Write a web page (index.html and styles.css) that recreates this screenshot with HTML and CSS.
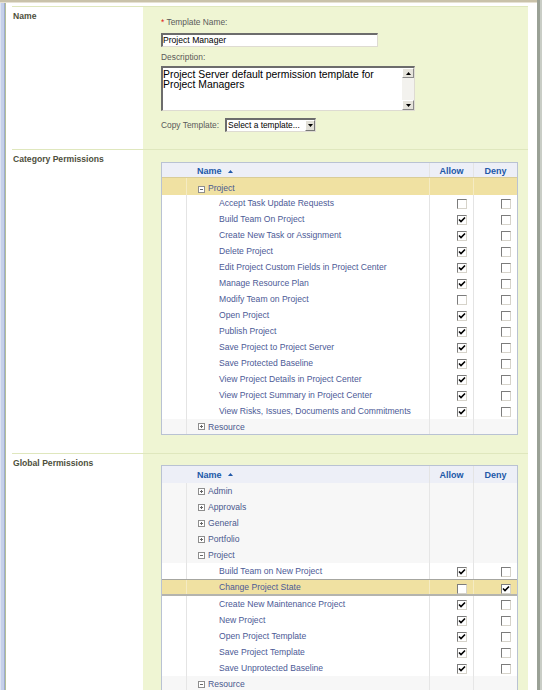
FILE: index.html
```html
<!DOCTYPE html>
<html>
<head>
<meta charset="utf-8">
<title>Permission Template</title>
<link rel="stylesheet" href="styles.css">
</head>
<body>
<div class="shell">
  <div class="main">
    <div class="topbar"></div>
    <div class="body">
      <div class="lstrip"></div>
      <div class="page">

        <section class="sec">
          <div class="lbl">Name</div>
          <div class="panel form">
            <div class="flabel"><span class="req">*</span> Template Name:</div>
            <div class="input">Project Manager</div>
            <div class="flabel desc">Description:</div>
            <div class="textarea">
              <div class="ta-text">Project Server default permission template for<br>Project Managers</div>
              <div class="sb">
                <div class="sbtn"><svg width="5" height="3" viewBox="0 0 5 3"><path d="M0 3L2.5 0L5 3Z" fill="#000"/></svg></div>
                <div class="track"></div>
                <div class="sbtn"><svg width="5" height="3" viewBox="0 0 5 3"><path d="M0 0L5 0L2.5 3Z" fill="#000"/></svg></div>
              </div>
            </div>
            <div class="copy">
              <span class="flabel">Copy Template:</span>
              <div class="select">
                <span class="sel-text">Select a template...</span>
                <span class="dd"><svg width="5" height="3" viewBox="0 0 5 3"><path d="M0 0L5 0L2.5 3Z" fill="#000"/></svg></span>
              </div>
            </div>
          </div>
        </section>

        <section class="sec">
          <div class="lbl">Category Permissions</div>
          <div class="panel perm-panel cat">
            <div class="perm">
              <div class="row head">
                <div class="c0"></div>
                <div class="c1">Name <svg class="sort" width="5" height="3" viewBox="0 0 5 3"><path d="M0 3L2.5 0L5 3Z"/></svg></div>
                <div class="c2">Allow</div>
                <div class="c3">Deny</div>
              </div>
              <div class="row grp tan">
                <div class="c0"></div>
                <div class="c1"><svg class="exp" width="7" height="7" viewBox="0 0 7 7"><rect x=".5" y=".5" width="6" height="6" fill="#fff" stroke="#8e8e8e"/><path d="M2 3.5h3" stroke="#666"/></svg>Project</div>
                <div class="c2"></div>
                <div class="c3"></div>
              </div>
              <div class="row item"><div class="c0"></div><div class="c1">Accept Task Update Requests</div><div class="c2"><span class="cb"></span></div><div class="c3"><span class="cb"></span></div></div>
              <div class="row item"><div class="c0"></div><div class="c1">Build Team On Project</div><div class="c2"><span class="cb on"><svg width="8" height="8" viewBox="0 0 8 8"><path d="M1 3.5L3 5.5L7 1.5" fill="none" stroke="#000" stroke-width="1.6"/></svg></span></div><div class="c3"><span class="cb"></span></div></div>
              <div class="row item"><div class="c0"></div><div class="c1">Create New Task or Assignment</div><div class="c2"><span class="cb on"><svg width="8" height="8" viewBox="0 0 8 8"><path d="M1 3.5L3 5.5L7 1.5" fill="none" stroke="#000" stroke-width="1.6"/></svg></span></div><div class="c3"><span class="cb"></span></div></div>
              <div class="row item"><div class="c0"></div><div class="c1">Delete Project</div><div class="c2"><span class="cb on"><svg width="8" height="8" viewBox="0 0 8 8"><path d="M1 3.5L3 5.5L7 1.5" fill="none" stroke="#000" stroke-width="1.6"/></svg></span></div><div class="c3"><span class="cb"></span></div></div>
              <div class="row item"><div class="c0"></div><div class="c1">Edit Project Custom Fields in Project Center</div><div class="c2"><span class="cb on"><svg width="8" height="8" viewBox="0 0 8 8"><path d="M1 3.5L3 5.5L7 1.5" fill="none" stroke="#000" stroke-width="1.6"/></svg></span></div><div class="c3"><span class="cb"></span></div></div>
              <div class="row item"><div class="c0"></div><div class="c1">Manage Resource Plan</div><div class="c2"><span class="cb on"><svg width="8" height="8" viewBox="0 0 8 8"><path d="M1 3.5L3 5.5L7 1.5" fill="none" stroke="#000" stroke-width="1.6"/></svg></span></div><div class="c3"><span class="cb"></span></div></div>
              <div class="row item"><div class="c0"></div><div class="c1">Modify Team on Project</div><div class="c2"><span class="cb"></span></div><div class="c3"><span class="cb"></span></div></div>
              <div class="row item"><div class="c0"></div><div class="c1">Open Project</div><div class="c2"><span class="cb on"><svg width="8" height="8" viewBox="0 0 8 8"><path d="M1 3.5L3 5.5L7 1.5" fill="none" stroke="#000" stroke-width="1.6"/></svg></span></div><div class="c3"><span class="cb"></span></div></div>
              <div class="row item"><div class="c0"></div><div class="c1">Publish Project</div><div class="c2"><span class="cb on"><svg width="8" height="8" viewBox="0 0 8 8"><path d="M1 3.5L3 5.5L7 1.5" fill="none" stroke="#000" stroke-width="1.6"/></svg></span></div><div class="c3"><span class="cb"></span></div></div>
              <div class="row item"><div class="c0"></div><div class="c1">Save Project to Project Server</div><div class="c2"><span class="cb on"><svg width="8" height="8" viewBox="0 0 8 8"><path d="M1 3.5L3 5.5L7 1.5" fill="none" stroke="#000" stroke-width="1.6"/></svg></span></div><div class="c3"><span class="cb"></span></div></div>
              <div class="row item"><div class="c0"></div><div class="c1">Save Protected Baseline</div><div class="c2"><span class="cb on"><svg width="8" height="8" viewBox="0 0 8 8"><path d="M1 3.5L3 5.5L7 1.5" fill="none" stroke="#000" stroke-width="1.6"/></svg></span></div><div class="c3"><span class="cb"></span></div></div>
              <div class="row item"><div class="c0"></div><div class="c1">View Project Details in Project Center</div><div class="c2"><span class="cb on"><svg width="8" height="8" viewBox="0 0 8 8"><path d="M1 3.5L3 5.5L7 1.5" fill="none" stroke="#000" stroke-width="1.6"/></svg></span></div><div class="c3"><span class="cb"></span></div></div>
              <div class="row item"><div class="c0"></div><div class="c1">View Project Summary in Project Center</div><div class="c2"><span class="cb on"><svg width="8" height="8" viewBox="0 0 8 8"><path d="M1 3.5L3 5.5L7 1.5" fill="none" stroke="#000" stroke-width="1.6"/></svg></span></div><div class="c3"><span class="cb"></span></div></div>
              <div class="row item"><div class="c0"></div><div class="c1">View Risks, Issues, Documents and Commitments</div><div class="c2"><span class="cb on"><svg width="8" height="8" viewBox="0 0 8 8"><path d="M1 3.5L3 5.5L7 1.5" fill="none" stroke="#000" stroke-width="1.6"/></svg></span></div><div class="c3"><span class="cb"></span></div></div>
              <div class="row grp gray last">
                <div class="c0"></div>
                <div class="c1"><svg class="exp" width="7" height="7" viewBox="0 0 7 7"><rect x=".5" y=".5" width="6" height="6" fill="#fff" stroke="#8e8e8e"/><path d="M2 3.5h3M3.5 2v3" stroke="#666"/></svg>Resource</div>
                <div class="c2"></div>
                <div class="c3"></div>
              </div>
            </div>
          </div>
        </section>

        <section class="sec">
          <div class="lbl">Global Permissions</div>
          <div class="panel perm-panel glob">
            <div class="perm">
              <div class="row head tall">
                <div class="c0"></div>
                <div class="c1">Name <svg class="sort" width="5" height="3" viewBox="0 0 5 3"><path d="M0 3L2.5 0L5 3Z"/></svg></div>
                <div class="c2">Allow</div>
                <div class="c3">Deny</div>
              </div>
              <div class="row grp gray"><div class="c0"></div><div class="c1"><svg class="exp" width="7" height="7" viewBox="0 0 7 7"><rect x=".5" y=".5" width="6" height="6" fill="#fff" stroke="#8e8e8e"/><path d="M2 3.5h3M3.5 2v3" stroke="#666"/></svg>Admin</div><div class="c2"></div><div class="c3"></div></div>
              <div class="row grp gray"><div class="c0"></div><div class="c1"><svg class="exp" width="7" height="7" viewBox="0 0 7 7"><rect x=".5" y=".5" width="6" height="6" fill="#fff" stroke="#8e8e8e"/><path d="M2 3.5h3M3.5 2v3" stroke="#666"/></svg>Approvals</div><div class="c2"></div><div class="c3"></div></div>
              <div class="row grp gray"><div class="c0"></div><div class="c1"><svg class="exp" width="7" height="7" viewBox="0 0 7 7"><rect x=".5" y=".5" width="6" height="6" fill="#fff" stroke="#8e8e8e"/><path d="M2 3.5h3M3.5 2v3" stroke="#666"/></svg>General</div><div class="c2"></div><div class="c3"></div></div>
              <div class="row grp gray"><div class="c0"></div><div class="c1"><svg class="exp" width="7" height="7" viewBox="0 0 7 7"><rect x=".5" y=".5" width="6" height="6" fill="#fff" stroke="#8e8e8e"/><path d="M2 3.5h3M3.5 2v3" stroke="#666"/></svg>Portfolio</div><div class="c2"></div><div class="c3"></div></div>
              <div class="row grp gray"><div class="c0"></div><div class="c1"><svg class="exp" width="7" height="7" viewBox="0 0 7 7"><rect x=".5" y=".5" width="6" height="6" fill="#fff" stroke="#8e8e8e"/><path d="M2 3.5h3" stroke="#666"/></svg>Project</div><div class="c2"></div><div class="c3"></div></div>
              <div class="row item"><div class="c0"></div><div class="c1">Build Team on New Project</div><div class="c2"><span class="cb on"><svg width="8" height="8" viewBox="0 0 8 8"><path d="M1 3.5L3 5.5L7 1.5" fill="none" stroke="#000" stroke-width="1.6"/></svg></span></div><div class="c3"><span class="cb"></span></div></div>
              <div class="row item sel"><div class="c0"></div><div class="c1">Change Project State</div><div class="c2"><span class="cb"></span></div><div class="c3"><span class="cb on"><svg width="8" height="8" viewBox="0 0 8 8"><path d="M1 3.5L3 5.5L7 1.5" fill="none" stroke="#000" stroke-width="1.6"/></svg></span></div></div>
              <div class="row item"><div class="c0"></div><div class="c1">Create New Maintenance Project</div><div class="c2"><span class="cb on"><svg width="8" height="8" viewBox="0 0 8 8"><path d="M1 3.5L3 5.5L7 1.5" fill="none" stroke="#000" stroke-width="1.6"/></svg></span></div><div class="c3"><span class="cb"></span></div></div>
              <div class="row item"><div class="c0"></div><div class="c1">New Project</div><div class="c2"><span class="cb on"><svg width="8" height="8" viewBox="0 0 8 8"><path d="M1 3.5L3 5.5L7 1.5" fill="none" stroke="#000" stroke-width="1.6"/></svg></span></div><div class="c3"><span class="cb"></span></div></div>
              <div class="row item"><div class="c0"></div><div class="c1">Open Project Template</div><div class="c2"><span class="cb on"><svg width="8" height="8" viewBox="0 0 8 8"><path d="M1 3.5L3 5.5L7 1.5" fill="none" stroke="#000" stroke-width="1.6"/></svg></span></div><div class="c3"><span class="cb"></span></div></div>
              <div class="row item"><div class="c0"></div><div class="c1">Save Project Template</div><div class="c2"><span class="cb on"><svg width="8" height="8" viewBox="0 0 8 8"><path d="M1 3.5L3 5.5L7 1.5" fill="none" stroke="#000" stroke-width="1.6"/></svg></span></div><div class="c3"><span class="cb"></span></div></div>
              <div class="row item"><div class="c0"></div><div class="c1">Save Unprotected Baseline</div><div class="c2"><span class="cb on"><svg width="8" height="8" viewBox="0 0 8 8"><path d="M1 3.5L3 5.5L7 1.5" fill="none" stroke="#000" stroke-width="1.6"/></svg></span></div><div class="c3"><span class="cb"></span></div></div>
              <div class="row grp gray"><div class="c0"></div><div class="c1"><svg class="exp" width="7" height="7" viewBox="0 0 7 7"><rect x=".5" y=".5" width="6" height="6" fill="#fff" stroke="#8e8e8e"/><path d="M2 3.5h3" stroke="#666"/></svg>Resource</div><div class="c2"></div><div class="c3"></div></div>
            </div>
          </div>
        </section>

      </div>
    </div>
  </div>
  <div class="rstrip"></div>
</div>
</body>
</html>
```

FILE: styles.css
```css
* { box-sizing: border-box; }
html, body { margin: 0; padding: 0; }
body {
  background: #fff;
  font-family: "Liberation Sans", Arial, sans-serif;
  font-size: 8.6px;
  color: #4c5a96;
}
.shell { display: flex; min-height: 100vh; }
.main { flex: 1; display: flex; flex-direction: column; min-width: 0; }
.topbar { height: 3px; background: #c9c2aa; border-bottom: 1px solid #e6e1d3; }
.body { display: flex; flex: 1; }
.lstrip {
  width: 6px; flex: none;
  background: linear-gradient(to right, #dde3f1 0 1px, #c5d0ea 1px 4px, #9dabcf 4px 5px, #b4bf98 5px 6px);
}
.rstrip {
  width: 7px; flex: none;
  background: linear-gradient(to right, #9aa196 0 3px, #c9cdc6 3px 5px, #fff 5px 7px);
}
.page { flex: 1; padding: 3px 9px 0 6px; }

.sec {
  display: grid;
  grid-template-columns: 131px 1fr;
  border-top: 1px solid #dfe7bd;
}
.lbl {
  padding: 4px 0 0 1px;
  font-weight: bold;
  font-size: 8.6px;
  line-height: 11px;
  color: #4e4f3c;
}
.panel { background: #eff5d3; }

/* form */
.form { padding: 10px 0 17px 18px; }
.flabel { color: #5a5a5a; font-size: 8.4px; line-height: 11px; }
.req { color: #e01010; }
.input {
  margin-top: 5px;
  width: 217px; height: 14px;
  border-style: solid;
  border-width: 2px 1px 1px 2px;
  border-color: #6c6c6c #dedbd2 #dedbd2 #6c6c6c;
  background: #fff;
  color: #000;
  font-size: 8.6px;
  line-height: 11px;
  padding-left: 0;
}
.desc { margin-top: 5px; }
.textarea {
  margin-top: 3px;
  width: 254px; height: 45px;
  display: flex;
  border-style: solid;
  border-width: 2px 1px 1px 2px;
  border-color: #6c6c6c #dedbd2 #dedbd2 #6c6c6c;
  background: #fff;
}
.ta-text {
  flex: 1;
  color: #000;
  font-size: 10.4px;
  line-height: 10px;
  padding: 2px 0 0 0;
}
.sb { width: 12px; flex: none; display: flex; flex-direction: column; }
.sbtn {
  height: 10px;
  background: #e6e4dc;
  border: 1px solid;
  border-color: #fff #8a8a8a #8a8a8a #fff;
  display: flex; align-items: center; justify-content: center;
}
.track { flex: 1; background: #f3f2ee; }
.copy { margin-top: 7px; display: flex; align-items: center; gap: 6px; }
.select {
  width: 91px; height: 14px;
  display: flex; align-items: stretch;
  border-style: solid;
  border-width: 2px 1px 1px 2px;
  border-color: #6c6c6c #dedbd2 #dedbd2 #6c6c6c;
  background: #fff;
}
.sel-text { flex: 1; color: #000; font-size: 8.4px; line-height: 11px; padding-left: 1px; white-space: nowrap; overflow: hidden; }
.dd {
  width: 10px; flex: none;
  background: #e2e0d8;
  border: 1px solid;
  border-color: #fff #777 #777 #fff;
  display: flex; align-items: center; justify-content: center;
}

/* permission grids */
.perm-panel { padding: 12px 10px 18px 18px; }
.glob { padding-top: 11px; }
.perm {
  border: 1px solid #b9c2d3;
  background: #fff;
}
.row {
  display: grid;
  grid-template-columns: 24px 243px 44px 44px;
  height: 16px;
}
.row > div { display: flex; align-items: center; white-space: nowrap; }
.row > .c1, .row > .c2, .row > .c3 { border-left: 1px solid #e4e4e4; }
.head { height: 14px; background: #edeff7; }
.head.tall { height: 17px; }
.head > div { color: #2158a8; font-weight: bold; font-size: 9px; padding-top: 2px; }
.head.tall > div { padding-top: 0; }
.head > .c1 { padding-left: 10px; border-left-color: #edeff7; }
.head > .c2, .head > .c3 { justify-content: center; }
.sort { margin-left: 6px; fill: #2158a8; }

.grp > .c1 { padding-left: 11px; color: #4a598e; }
.exp { margin-right: 3px; flex: none; }
.gray { background: #f7f7f7; }
.gray > .c1, .gray > .c2, .gray > .c3 { border-left-color: #e6e6e6; }
.last { height: 15px; }
.tan {
  height: 18px;
  background: #f0e1a2;
  border-top: 1px solid #d9cd98;
}
.tan > div { align-items: flex-end; padding-bottom: 2px; }
.tan > .c1, .tan > .c2, .tan > .c3 { border-left-color: #f5ebc3; }

.item > .c1 { padding-left: 32px; color: #4c5a96; }
.item > .c2, .item > .c3 { justify-content: flex-end; align-items: flex-start; padding: 4px 6px 0 0; }
.sel {
  background: #f0e1a2;
  border-top: 1px solid #a6a6a0;
  border-bottom: 2px solid #b4b4ae;
  height: 17px;
}
.sel > .c1, .sel > .c2, .sel > .c3 { border-left-color: #f5ebc3; }
.sel > .c2, .sel > .c3 { padding-top: 4px; }

.cb {
  display: inline-flex; align-items: center; justify-content: center;
  width: 10px; height: 10px;
  border: 1px solid;
  border-color: #7c7c7c #d6d3ca #d6d3ca #7c7c7c;
  background: #fff;
}
.cb svg { display: block; }
```
